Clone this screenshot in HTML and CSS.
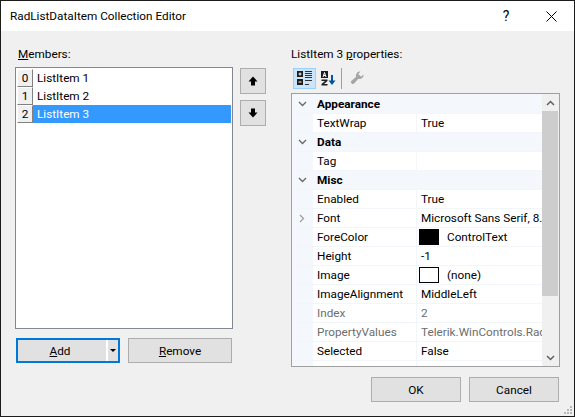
FILE: index.html
```html
<!DOCTYPE html>
<html lang="en">
<head>
<meta charset="utf-8">
<title>RadListDataItem Collection Editor</title>
<link rel="stylesheet" href="styles.css">
</head>
<body>
<div class="window">
  <header class="titlebar">
    <span class="title">RadListDataItem Collection Editor</span>
    <span class="help">?</span>
    <svg class="close" width="11" height="11" viewBox="0 0 11 11"><path d="M.5.5l10 10M10.500.5l-10 10" stroke="#000" fill="none"/></svg>
  </header>
  <main class="content">
    <section class="members">
      <div class="label indent"><u>M</u>embers:</div>
      <div class="list">
        <div class="item"><span class="idx">0</span><span class="name">ListItem 1</span></div>
        <div class="item"><span class="idx">1</span><span class="name">ListItem 2</span></div>
        <div class="item selected"><span class="idx">2</span><span class="name">ListItem 3</span></div>
      </div>
      <div class="actions">
        <div class="btn split"><span class="split-main"><u>A</u>dd</span><span class="split-arrow"><i class="caret"></i></span></div>
        <div class="btn remove"><u>R</u>emove</div>
      </div>
    </section>
    <section class="move">
      <div class="btn square"><svg width="10" height="10" viewBox="0 0 10 10"><path d="M5 .5L9.500 5.500H7V9.500H3V5.500H.5Z" fill="#000"/></svg></div>
      <div class="btn square"><svg width="10" height="10" viewBox="0 0 10 10"><path d="M5 9.500L9.500 4.500H7V.5H3V4.500H.5Z" fill="#000"/></svg></div>
    </section>
    <section class="props">
      <div class="label">ListItem 3 <u>p</u>roperties:</div>
      <div class="toolbar">
        <span class="tool active"><svg width="20" height="16" viewBox="0 0 20 16"><path d="M2 1h6v6H2zM2 9h6v6H2z" fill="#1e1e1e"/><path d="M3.500 4h3M5 2.500v3M3.500 12h3" stroke="#fff"/><path d="M10 1.500h7M10 3.500h7M10 5.500h7M10 7.500h7M10 10.500h7M10 14.500h4" stroke="#333"/></svg></span>
        <span class="tool"><svg width="16" height="15" viewBox="0 0 16 15"><path d="M1 0h7v7H1z" fill="#1e1e1e"/><path d="M3 6L4.500 1.500 6 6M3.500 4.500h2" stroke="#fff" fill="none"/><path d="M1.500 8.500h6V10L4 13h3.500v1.500h-6V13L5 10H1.500z" fill="#1e1e1e"/><path d="M12 4v8" stroke="#00539c" stroke-width="2"/><path d="M8.500 9.500h7L12 14z" fill="#00539c"/></svg></span>
        <span class="tool-sep"></span>
        <span class="tool"><svg width="14" height="14" viewBox="0 0 16 16"><path d="M15.500 4a4.500 4.500 0 0 1-6 4.800L5 14a2.200 2.200 0 0 1-3.300-3L7 6.500A4.500 4.500 0 0 1 12 .7L9.500 3.500l3 3z" fill="#a5a5a5"/></svg></span>
      </div>
      <div class="grid">
        <div class="rows">
          <div class="row cat"><span class="gut"><svg width="9" height="6" viewBox="0 0 9 6"><path d="M1 1l3.500 3.500L8 1" stroke="#666" stroke-width="1.300" fill="none"/></svg></span><span class="cat-name">Appearance</span></div>
          <div class="row"><span class="gut"></span><span class="key">TextWrap</span><span class="val">True</span></div>
          <div class="row cat"><span class="gut"><svg width="9" height="6" viewBox="0 0 9 6"><path d="M1 1l3.500 3.500L8 1" stroke="#666" stroke-width="1.300" fill="none"/></svg></span><span class="cat-name">Data</span></div>
          <div class="row"><span class="gut"></span><span class="key">Tag</span><span class="val"></span></div>
          <div class="row cat"><span class="gut"><svg width="9" height="6" viewBox="0 0 9 6"><path d="M1 1l3.500 3.500L8 1" stroke="#666" stroke-width="1.300" fill="none"/></svg></span><span class="cat-name">Misc</span></div>
          <div class="row"><span class="gut"></span><span class="key">Enabled</span><span class="val">True</span></div>
          <div class="row"><span class="gut"><svg width="6" height="9" viewBox="0 0 6 9"><path d="M1 1l3.500 3.500L1 8" stroke="#a0a0a0" stroke-width="1.300" fill="none"/></svg></span><span class="key">Font</span><span class="val">Microsoft Sans Serif, 8.25pt</span></div>
          <div class="row"><span class="gut"></span><span class="key">ForeColor</span><span class="val"><i class="swatch black"></i>ControlText</span></div>
          <div class="row"><span class="gut"></span><span class="key">Height</span><span class="val">-1</span></div>
          <div class="row"><span class="gut"></span><span class="key">Image</span><span class="val"><i class="swatch"></i>(none)</span></div>
          <div class="row"><span class="gut"></span><span class="key">ImageAlignment</span><span class="val">MiddleLeft</span></div>
          <div class="row ro"><span class="gut"></span><span class="key">Index</span><span class="val">2</span></div>
          <div class="row ro"><span class="gut"></span><span class="key">PropertyValues</span><span class="val">Telerik.WinControls.RadProperty</span></div>
          <div class="row"><span class="gut"></span><span class="key">Selected</span><span class="val">False</span></div>
          <div class="row"><span class="gut"></span><span class="key">Text</span><span class="val">ListItem 3</span></div>
        </div>
        <div class="scrollbar">
          <span class="sb-btn"><svg width="9" height="6" viewBox="0 0 9 6"><path d="M1 5l3.500-3.500L8 5" stroke="#606060" stroke-width="1.500" fill="none"/></svg></span>
          <span class="sb-thumb"></span>
          <span class="sb-track"></span>
          <span class="sb-btn"><svg width="9" height="6" viewBox="0 0 9 6"><path d="M1 1l3.500 3.500L8 1" stroke="#606060" stroke-width="1.500" fill="none"/></svg></span>
        </div>
      </div>
      <div class="footer">
        <div class="btn foot">OK</div>
        <div class="btn foot">Cancel</div>
      </div>
    </section>
  </main>
  <svg class="grip" width="10" height="10" viewBox="0 0 10 10"><path d="M7 1h2v2H7zM4 4h2v2H4zM7 4h2v2H7zM1 7h2v2H1zM4 7h2v2H4zM7 7h2v2H7z" fill="#b8b8b8"/></svg>
</div>
</body>
</html>
```
FILE: styles.css
```css
* { box-sizing: border-box; }
html, body { margin: 0; padding: 0; }
body { width: 575px; height: 417px; overflow: hidden; font: 11.75px/16px Roboto, "Noto Sans", sans-serif; color: #000; }
.window { position: relative; width: 575px; height: 417px; border: 1px solid #1c1c1c; background: #f0f0f0; display: flex; flex-direction: column; }
.titlebar { height: 30px; background: #fff; display: flex; align-items: center; padding-left: 9px; flex: none; }
.title { flex: 1; }
.help { width: 12px; margin-right: 34px; font-size: 14px; text-align: center; }
.close { margin-right: 17px; }
.content { flex: 1; display: flex; padding: 14px 14px 0; }
.label { height: 22px; padding-top: 1px; line-height: 16px; }
.indent { padding-left: 3px; }
.members { width: 218px; flex: none; }
.list { height: 262px; background: #fff; border: 1px solid #828790; padding: 1px; }
.item { height: 18px; display: flex; }
.idx { width: 16px; height: 18px; background: #f0f0f0; border: 1px solid; border-color: #fff #808080 #808080 #fff; text-align: center; line-height: 16px; flex: none; }
.name { flex: 1; padding-left: 4px; line-height: 18px; }
.selected .name { background: #3399ff; color: #fff; }
.actions { display: flex; justify-content: space-between; margin-top: 9px; padding-left: 1px; }
.btn { background: #e1e1e1; border: 1px solid #adadad; display: flex; align-items: center; justify-content: center; }
.split { width: 104px; height: 25px; border: 2px solid #0078d7; padding: 0; justify-content: flex-start; }
.split-main { flex: 1; text-align: center; padding-right: 4px; }
.split-arrow { width: 12px; height: 100%; border-left: 2px solid #fff; display: flex; align-items: center; justify-content: center; }
.caret { width: 0; height: 0; border: 3px solid transparent; border-top-color: #000; border-bottom: 0; }
.remove { width: 104px; height: 25px; margin-right: 1px; }
.move { width: 26px; margin: 23px 25px 0 7px; display: flex; flex-direction: column; gap: 6px; flex: none; }
.square { width: 26px; height: 26px; }
.props { width: 269px; flex: none; }
.toolbar { height: 24px; display: flex; align-items: center; padding-left: 2px; margin-bottom: 3px; margin-top: -1px; }
.tool { width: 23px; height: 21px; display: flex; align-items: center; justify-content: center; border: 1px solid transparent; }
.tool.active { background: #cce4f7; border-color: #99d1ff; }
.tool-sep { width: 1px; height: 21px; background: #a0a0a0; margin: 0 3px 0 2px; }
.grid { height: 274px; width: 269px; border: 1px solid #a0a0a0; background: #fff; display: flex; overflow: hidden; }
.rows { flex: 1; min-width: 0; overflow: hidden; padding-top: 1px; background: #f4f7fc; }
.row { height: 19px; display: flex; align-items: center; border-bottom: 1px solid #f2f5fa; overflow: hidden; white-space: nowrap; background: #fff; }
.gut { width: 21px; height: 19px; background: #f4f7fc; flex: none; display: flex; align-items: center; justify-content: center; padding-right: 1px; }
.row.cat { background: #f4f7fc; }
.cat-name { font-weight: 700; padding-left: 4px; }
.key { width: 104px; padding-left: 4px; border-right: 1px solid #f2f5fa; height: 19px; line-height: 18px; flex: none; }
.val { padding-left: 4px; display: flex; align-items: center; flex: none; }
.ro { color: #6d6d6d; }
.swatch { width: 20px; height: 16px; border: 1px solid #000; background: #fff; margin: 0 8px 0 -2px; }
.swatch.black { background: #000; }
.scrollbar { width: 17px; flex: none; background: #f0f0f0; display: flex; flex-direction: column; padding-right: 1px; }
.sb-btn { height: 17px; display: flex; align-items: center; justify-content: center; flex: none; }
.sb-thumb { height: 185px; background: #cdcdcd; flex: none; }
.sb-track { flex: 1; }
.footer { display: flex; justify-content: flex-end; gap: 8px; margin-top: 10px; padding-right: 1px; }
.foot { width: 90px; height: 25px; }
.grip { position: absolute; right: 1px; bottom: 1px; }
```
